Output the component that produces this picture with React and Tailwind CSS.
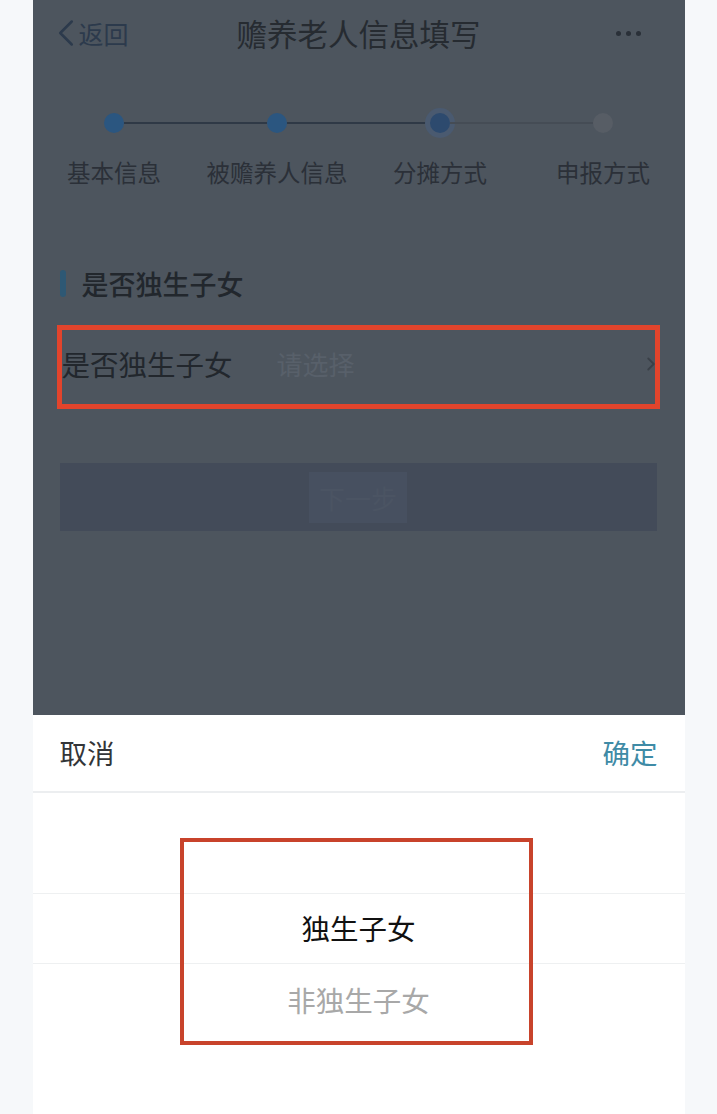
import { ChevronLeft, ChevronRight } from "lucide-react";

const cjk = { fontFamily: '"Noto Sans CJK SC", "Noto Sans", sans-serif' };

const steps = [
  { label: "基本信息", dot: "done" },
  { label: "被赡养人信息", dot: "done" },
  { label: "分摊方式", dot: "current" },
  { label: "申报方式", dot: "todo" },
];

function Step({ step, i }) {
  const leftLine = i === 0 ? "bg-transparent" : i <= 2 ? "bg-[#2f3946]" : "bg-[#454c55]";
  const rightLine = i === 3 ? "bg-transparent" : i < 2 ? "bg-[#2f3946]" : "bg-[#454c55]";
  return (
    <div className="flex flex-col items-center">
      <div className="flex items-center w-full h-5">
        <div className={`flex-1 h-[2px] ${leftLine}`} />
        {step.dot === "done" && <div className="w-5 h-5 rounded-full bg-[#2b5680]" />}
        {step.dot === "current" && (
          <div className="w-5 h-5 rounded-full bg-[#2d4a6e] ring-[5px] ring-[#4a5a70]" />
        )}
        {step.dot === "todo" && <div className="w-5 h-5 rounded-full bg-[#575d65]" />}
        <div className={`flex-1 h-[2px] ${rightLine}`} />
      </div>
      <div className="mt-[24px] text-[23.5px] leading-[30px] text-[#2b3038]">{step.label}</div>
    </div>
  );
}

export default function App() {
  return (
    <div className="min-h-screen bg-[#f6f8fa]" style={cjk}>
      <div className="w-[652px] mx-auto h-[1114px] flex flex-col">
        {/* dimmed page behind the sheet */}
        <div className="h-[715px] bg-[#4d555e] flex flex-col">
          <div className="h-[66px] flex items-center px-[24px]">
            <div className="flex items-center w-[110px] text-[#2c3a4c]">
              <ChevronLeft size={46} strokeWidth={1.3} className="-ml-[14px]" />
              <span className="text-[25px] leading-none -ml-[10px]">返回</span>
            </div>
            <div className="flex-1 text-center text-[30.5px] leading-none text-[#262b31]">
              赡养老人信息填写
            </div>
            <div className="w-[110px] flex justify-end gap-[5px] pr-[20px]">
              <span className="w-[5px] h-[5px] rounded-full bg-[#2a3038]" />
              <span className="w-[5px] h-[5px] rounded-full bg-[#2a3038]" />
              <span className="w-[5px] h-[5px] rounded-full bg-[#2a3038]" />
            </div>
          </div>

          <div className="grid grid-cols-4 pt-[47px]">
            {steps.map((s, i) => (
              <Step key={s.label} step={s} i={i} />
            ))}
          </div>

          <div className="mt-[83px] ml-[27px] flex items-center h-[27px]">
            <div className="w-[6px] h-[27px] rounded-sm bg-[#2e5874]" />
            <span className="ml-[16px] text-[27px] font-medium leading-none text-[#22272d]">是否独生子女</span>
          </div>

          <div className="mt-[28px] ml-[24px] w-[603px] h-[84px] border-[5px] border-[#e2442c] flex items-center pb-[6px]">
            <span className="w-[215px] text-[28.5px] leading-none text-[#22272d]">是否独生子女</span>
            <span className="flex-1 text-[26px] leading-none text-[#58606a]">请选择</span>
            <ChevronRight size={22} className="text-[#3a4048] -mr-[7px]" />
          </div>

          <div className="mt-[54px] ml-[27px] w-[597px] h-[68px] bg-[#434b59] flex items-center justify-center">
            <span className="text-[26px] text-[#4b5463] bg-[#475060] px-[10px] py-[6px]">下一步</span>
          </div>
        </div>

        {/* picker sheet */}
        <div className="flex-1 bg-white flex flex-col relative">
          <div className="h-[78px] flex items-center justify-between px-[27px] border-b-2 border-[#eceef0]">
            <span className="text-[27.5px] leading-none text-[#333538]">取消</span>
            <span className="text-[27.5px] leading-none text-[#3f8ba6]">确定</span>
          </div>
          <div className="h-[101px] border-b border-[#eef0f1]" />
          <div className="h-[70px] flex items-center justify-center border-b border-[#eef0f1]">
            <span className="text-[28.5px] leading-none text-[#111111]">独生子女</span>
          </div>
          <div className="h-[72px] flex items-center justify-center">
            <span className="text-[28.5px] leading-none text-[#a8a8a8]">非独生子女</span>
          </div>

          <div className="absolute left-[147px] top-[123px] w-[353px] h-[207px] border-[4px] border-[#c8432b]" />
        </div>
      </div>
    </div>
  );
}
